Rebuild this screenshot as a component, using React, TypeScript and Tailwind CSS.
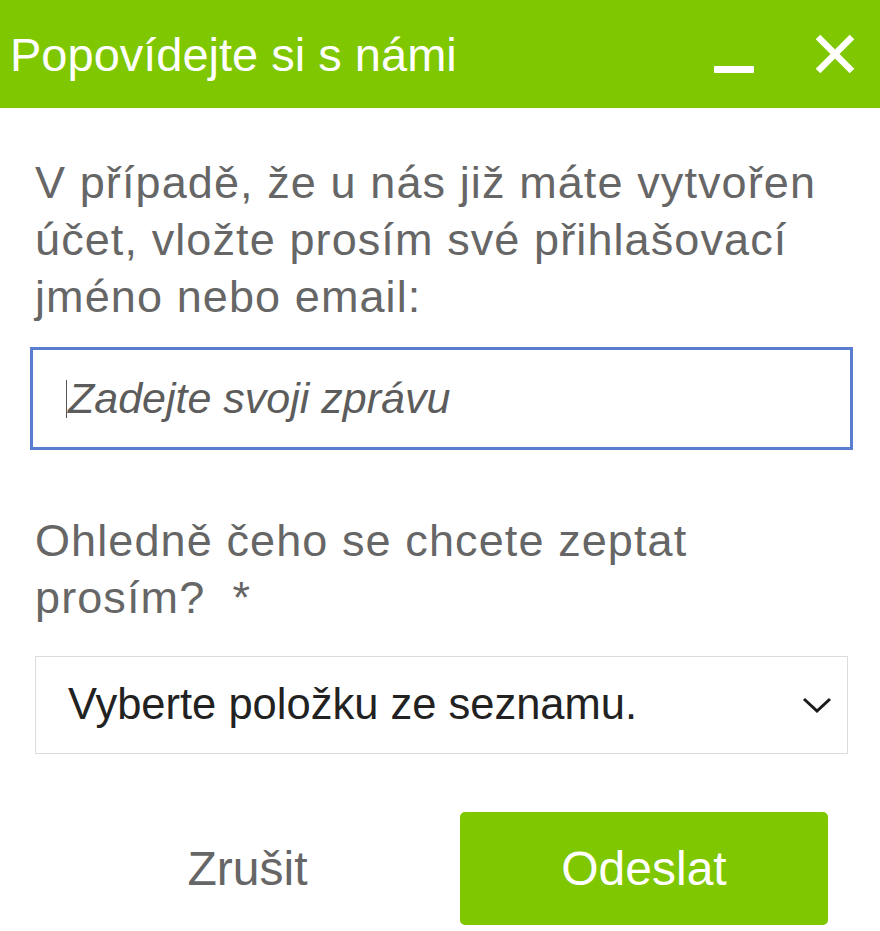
export default function App() {
  return (
    <div className="w-[880px] h-[931px] bg-white font-['Liberation_Sans',Arial,sans-serif] overflow-hidden">
      <div className="h-[108px] bg-[#7fc700] flex items-center justify-between pl-[10px] pr-[25px]">
        <h1 className="text-white text-[47px] leading-none">Popovídejte si s námi</h1>
        <div className="flex items-center gap-[61px]">
          <div className="w-[40px] h-[7px] bg-white mt-[30px] rounded-[1px]" />
          <svg width="40" height="40" viewBox="0 0 40 40" fill="none" stroke="white" strokeWidth="6.5">
            <path d="M3 3 L37 37 M37 3 L3 37" />
          </svg>
        </div>
      </div>

      <div className="px-[35px] pt-[46px]">
        <p className="text-[#666] text-[45px] tracking-[1.1px] leading-[57px]">
          V případě, že u nás již máte vytvořen účet, vložte prosím své přihlašovací jméno nebo email:
        </p>
      </div>

      <div className="px-[30px] mt-[22px] pr-[27px]">
        <div className="h-[103px] border-[3px] border-[#5a7ecf] flex items-center pl-[33px]">
          <span className="w-px h-[38px] bg-[#555] mr-px" />
          <span className="text-[#5c5c5c] italic text-[43px]">Zadejte svoji zprávu</span>
        </div>
      </div>

      <div className="px-[35px] pt-[62px]">
        <p className="text-[#666] text-[45px] tracking-[1.1px] leading-[57px]">
          Ohledně čeho se chcete zeptat prosím?&nbsp; *
        </p>
      </div>

      <div className="px-[35px] pr-[32px] mt-[30px]">
        <div className="h-[98px] border border-[#dcdcdc] flex items-center justify-between pl-[32px] pr-[15px]">
          <span className="text-[#222] text-[43.5px]">Vyberte položku ze seznamu.</span>
          <svg width="30" height="17" viewBox="0 0 30 17" fill="none" stroke="#1a1a1a" strokeWidth="3">
            <path d="M2 2 L15 14 L28 2" />
          </svg>
        </div>
      </div>

      <div className="flex items-center mt-[58px] pl-[35px] pr-[52px]">
        <button className="w-[425px] text-[#666] text-[48px] text-center">Zrušit</button>
        <button className="w-[368px] h-[113px] bg-[#7fc700] rounded-[5px] text-white text-[48px]">Odeslat</button>
      </div>
    </div>
  );
}
